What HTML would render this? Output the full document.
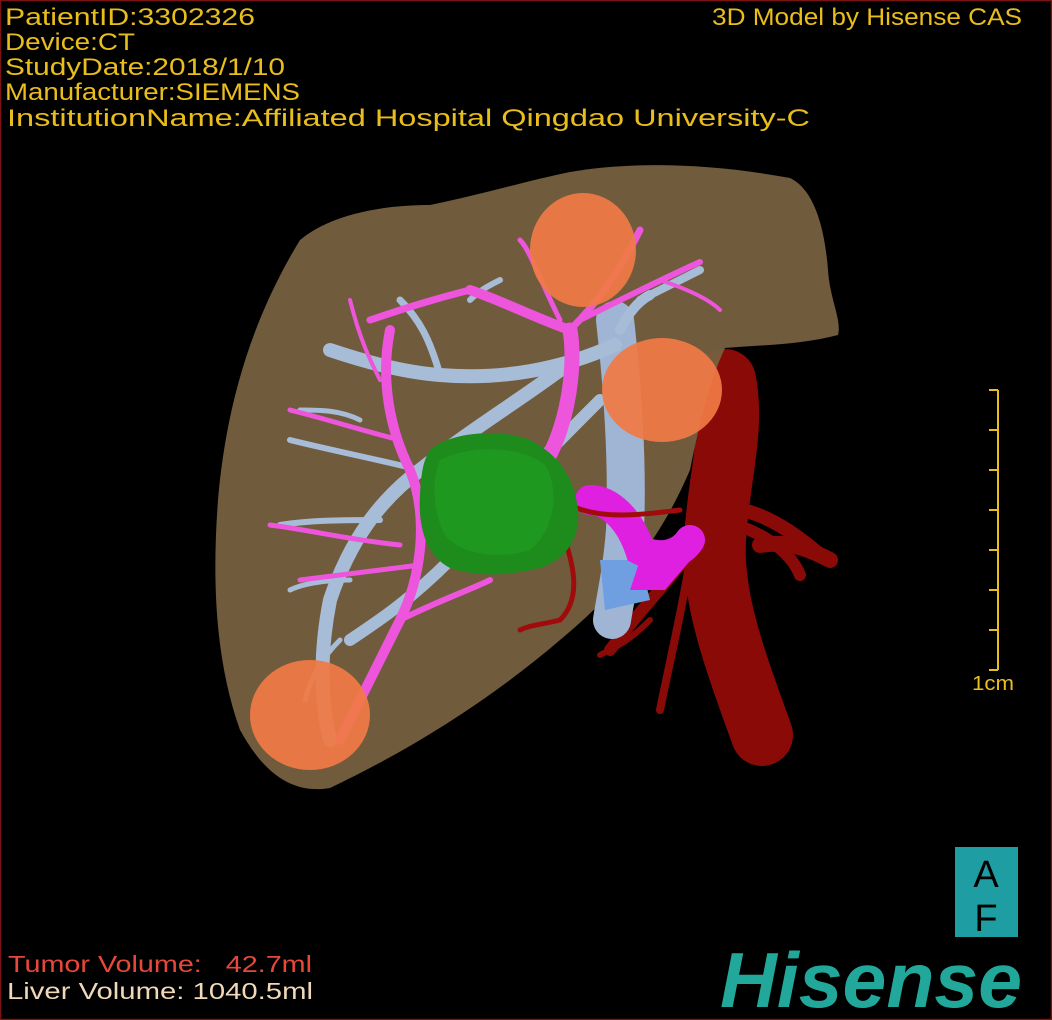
<!DOCTYPE html>
<html><head><meta charset="utf-8"><style>
html,body{margin:0;padding:0;background:#000;width:1052px;height:1020px;overflow:hidden}
svg{display:block}
</style></head><body>
<svg width="1052" height="1020" viewBox="0 0 1052 1020" xmlns="http://www.w3.org/2000/svg">
<rect x="0" y="0" width="1052" height="1020" fill="#000"/>
<rect x="0.5" y="0.5" width="1051" height="1019" fill="none" stroke="#7a1414" stroke-width="1.5"/>

<g fill="none" stroke="#8a0a08" stroke-linecap="round">
<path d="M725 380 C735 430 718 480 715 540 C712 600 735 660 762 735" stroke-width="62"/>
<path d="M700 510 C740 500 780 520 820 555" stroke-width="14"/>
<path d="M720 520 C760 530 790 550 800 575" stroke-width="12"/>
<path d="M700 540 C670 580 640 610 610 650" stroke-width="12"/>
<path d="M690 560 C680 620 670 660 660 710" stroke-width="8"/>
<path d="M650 620 C630 640 620 645 600 655" stroke-width="6"/>
<path d="M760 545 C790 540 810 550 830 560" stroke-width="16"/>
</g>

<path d="M300 240 C330 215 380 205 430 205 C480 195 530 180 570 172 C640 160 720 165 790 178 C815 190 825 230 828 270 C830 300 842 320 838 335 C800 345 760 345 725 348 C710 380 700 420 690 470 C660 540 620 590 560 640 C490 700 410 750 330 788 C290 795 262 770 240 730 C215 660 212 580 218 500 C225 420 245 330 300 240Z" fill="#765f3f" opacity="0.96"/>

<path d="M615 320 C622 380 628 460 625 530 C622 570 615 600 612 620" fill="none" stroke="#9fb5d3" stroke-width="38" stroke-linecap="round"/>
<path d="M600 560 L640 560 L650 600 L605 610Z" fill="#6f9fe0"/>

<g fill="none" stroke="#a7bcd7" stroke-linecap="round">
<path d="M615 345 C560 370 500 380 440 375 C400 372 360 360 330 350" stroke-width="14"/>
<path d="M560 370 C520 400 470 430 420 470 C380 500 350 540 330 600 C320 650 320 700 330 740" stroke-width="14"/>
<path d="M600 400 C560 440 500 500 450 560 C410 600 380 620 350 640" stroke-width="12"/>
<path d="M440 375 C430 340 420 320 400 300" stroke-width="7"/>
<path d="M420 470 C380 460 330 450 290 440" stroke-width="6"/>
<path d="M380 520 C350 520 310 520 280 525" stroke-width="6"/>
<path d="M350 580 C320 580 300 585 290 590" stroke-width="5"/>
<path d="M340 640 C320 660 310 680 305 700" stroke-width="5"/>
<path d="M640 300 C660 290 680 280 700 270" stroke-width="8"/>
<path d="M620 330 C630 310 640 300 650 295" stroke-width="10"/>
<path d="M470 300 C480 290 490 285 500 280" stroke-width="6"/>
<path d="M360 420 C340 410 320 410 300 410" stroke-width="5"/>
</g>

<g fill="none" stroke="#ee55dd" stroke-linecap="round">
<path d="M570 330 C575 360 570 400 560 430 C550 460 540 470 530 480" stroke-width="15"/>
<path d="M570 330 C540 320 500 300 470 290" stroke-width="10"/>
<path d="M570 330 C600 300 620 270 640 230" stroke-width="7"/>
<path d="M580 320 C620 300 660 280 700 262" stroke-width="6"/>
<path d="M560 320 C540 280 530 250 520 240" stroke-width="5"/>
<path d="M470 290 C430 300 400 310 370 320" stroke-width="7"/>
<path d="M390 330 C380 380 390 430 410 470 C430 520 420 580 400 620 C380 660 360 700 340 740" stroke-width="10"/>
<path d="M400 620 C440 600 470 590 490 580" stroke-width="6"/>
<path d="M290 410 C330 420 360 430 400 440" stroke-width="5"/>
<path d="M270 525 C310 530 350 540 400 545" stroke-width="5"/>
<path d="M300 580 C340 575 380 570 420 565" stroke-width="5"/>
<path d="M660 280 C690 290 710 300 720 310" stroke-width="4"/>
<path d="M350 300 C360 340 370 360 380 380" stroke-width="4"/>
<path d="M440 470 C470 470 480 460 500 450" stroke-width="5"/>
</g>
<path d="M590 500 C610 500 630 520 640 550 C660 560 680 555 690 540" fill="none" stroke="#e020e0" stroke-width="30" stroke-linecap="round"/>
<path d="M640 560 L690 530 L695 555 L665 590 L630 590Z" fill="#e020e0"/>

<g fill="none" stroke="#a00c0c" stroke-linecap="round" stroke-width="5">
<path d="M570 505 C600 520 640 515 680 510"/>
<path d="M565 540 C575 570 580 600 560 620 C540 625 530 625 520 630"/>
</g>

<ellipse cx="583" cy="250" rx="53" ry="57" fill="#f07a45" opacity="0.93"/>
<ellipse cx="662" cy="390" rx="60" ry="52" fill="#f07a45" opacity="0.93"/>
<ellipse cx="310" cy="715" rx="60" ry="55" fill="#f07a45" opacity="0.93"/>

<path d="M430 450 C450 432 500 428 530 440 C560 455 575 480 578 510 C580 540 565 560 540 568 C510 575 480 578 450 568 C425 555 418 525 420 495 C421 475 423 460 430 450Z" fill="#1d8c1d"/>
<path d="M440 460 C470 445 520 445 545 465 C560 490 555 530 530 550 C500 560 460 555 445 535 C432 510 432 480 440 460Z" fill="#22a022" opacity="0.6"/>

<g font-family="Liberation Sans, sans-serif" font-size="24" fill="#e9bd1c">
<text x="5" y="25" textLength="250" lengthAdjust="spacingAndGlyphs">PatientID:3302326</text>
<text x="5" y="50" textLength="130" lengthAdjust="spacingAndGlyphs">Device:CT</text>
<text x="5" y="75" textLength="280" lengthAdjust="spacingAndGlyphs">StudyDate:2018/1/10</text>
<text x="5" y="100" textLength="295" lengthAdjust="spacingAndGlyphs">Manufacturer:SIEMENS</text>
<text x="7" y="126" textLength="803" lengthAdjust="spacingAndGlyphs">InstitutionName:Affiliated Hospital Qingdao University-C</text>
<text x="712" y="25" textLength="310" lengthAdjust="spacingAndGlyphs">3D Model by Hisense CAS</text>
<text x="972" y="690" font-size="20" textLength="42" lengthAdjust="spacingAndGlyphs">1cm</text>
</g>
<text x="8" y="972" font-family="Liberation Sans, sans-serif" font-size="23" fill="#e8483a" textLength="304" lengthAdjust="spacingAndGlyphs" xml:space="preserve">Tumor Volume:   42.7ml</text>
<text x="7" y="999" font-family="Liberation Sans, sans-serif" font-size="23" fill="#f0d8b8" textLength="306" lengthAdjust="spacingAndGlyphs">Liver Volume: 1040.5ml</text>

<g stroke="#e9bd1c" stroke-width="2" fill="none">
<line x1="998" y1="390" x2="998" y2="670"/>
<line x1="989" y1="390" x2="998" y2="390"/>
<line x1="989" y1="430" x2="998" y2="430"/>
<line x1="989" y1="470" x2="998" y2="470"/>
<line x1="989" y1="510" x2="998" y2="510"/>
<line x1="989" y1="550" x2="998" y2="550"/>
<line x1="989" y1="590" x2="998" y2="590"/>
<line x1="989" y1="630" x2="998" y2="630"/>
<line x1="989" y1="670" x2="998" y2="670"/>
</g>

<rect x="955" y="847" width="63" height="90" fill="#1e9ea2"/>
<text x="986" y="887" text-anchor="middle" font-family="Liberation Sans, sans-serif" font-size="38" fill="#000">A</text>
<text x="986" y="931" text-anchor="middle" font-family="Liberation Sans, sans-serif" font-size="38" fill="#000">F</text>

<text x="720" y="1007" font-family="Liberation Sans, sans-serif" font-weight="bold" font-style="italic" font-size="78" fill="#21a89a" textLength="302" lengthAdjust="spacingAndGlyphs">Hisense</text>
</svg>
</body></html>
